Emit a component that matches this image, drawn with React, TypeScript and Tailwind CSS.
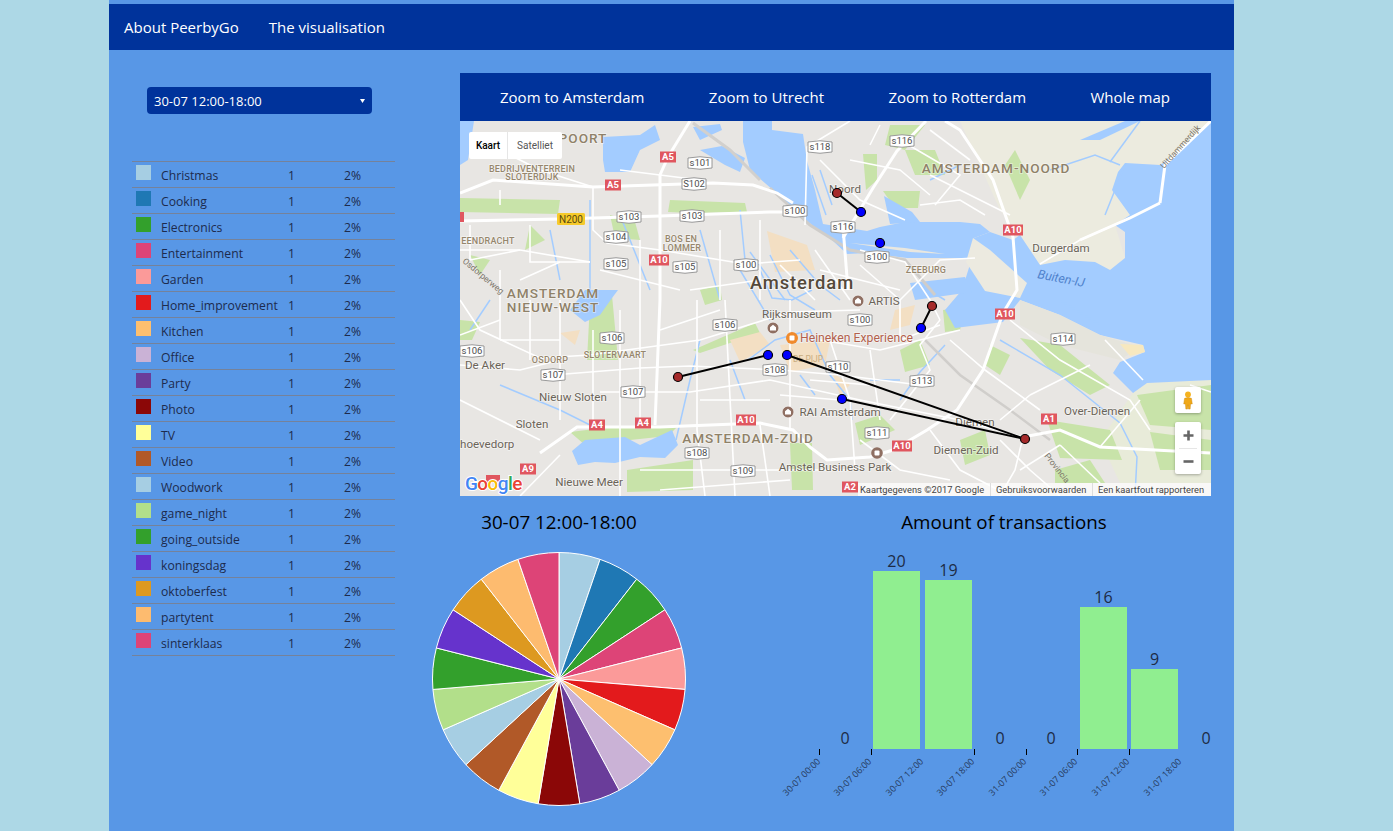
import React from "react";

const rows: [string, string][] = [
  ["Christmas", "#a6cee3"], ["Cooking", "#1f78b4"], ["Electronics", "#33a02c"], ["Entertainment", "#dd4477"],
  ["Garden", "#fb9a99"], ["Home_improvement", "#e31a1c"], ["Kitchen", "#fdbf6f"], ["Office", "#cab2d6"],
  ["Party", "#6a3d9a"], ["Photo", "#8b0707"], ["TV", "#ffff99"], ["Video", "#b15928"], ["Woodwork", "#a6cee3"],
  ["game_night", "#b2df8a"], ["going_outside", "#33a02c"], ["koningsdag", "#6633cc"], ["oktoberfest", "#dd9920"],
  ["partytent", "#fdbb6f"], ["sinterklaas", "#dd4477"],
];

const WATER = [
  "743,121 772,121 772,130 803,134 807,161 815,190 823,224 867,231 880,227 905,222 960,222 980,224 990,232 974,238 972,258 907,258 867,253 847,254 833,241 807,221 773,190 750,170 743,142",
  "1211,121 1175,155 1160,165 1125,163 1118,172 1112,190 1130,215 1115,225 1125,232 1125,258 1110,270 1095,262 1065,260 1040,265 1020,235 1013,240 990,232 974,238 972,258 962,290 945,310 955,328 1003,322 1020,300 1060,315 1100,335 1143,345 1145,352 1120,362 1113,373 1133,393 1147,383 1211,380",
  "572,451 585,440 625,437 640,445 672,430 678,445 665,458 640,457 615,463 595,462 578,465",
  "618,290 585,290 570,310 585,322 600,315 612,298",
  "603,137 640,135 655,125 660,140 640,150 630,172 605,172 603,160",
  "693,127 720,124 722,130 700,140",
  "700,150 725,165 740,172 745,158 722,146",
  "460,121 474,121 468,160 460,165",
  "1125,121 1140,121 1100,140 1080,140",
  "910,283 965,277 972,292 915,300",
  "884,196 912,212 920,222 890,224",
];
const LANDS: [string, string][] = [
  ["960,121 1211,121 1175,155 1160,165 1125,163 1112,190 1130,215 1115,225 1125,258 1110,270 1065,260 1040,265 1020,235 1000,210", "#ecebdf"],
  ["973,238 990,250 1027,283 1020,298 985,291", "#eceae0"],
  ["1133,393 1147,383 1211,380 1211,483 1120,483 1100,440", "#e8ebd9"],
];
const GREENS = [
  "670,200 745,203 747,212 690,213 668,212", "460,198 560,200 558,214 460,212", "863,154 877,154 877,180 866,190",
  "883,191 920,191 918,208 895,208", "905,150 935,150 945,175 915,175", "460,320 480,322 472,340 460,340",
  "590,303 612,295 618,360 587,360", "693,350 755,323 760,333 700,353", "570,432 620,426 678,426 668,436 630,440 585,445",
  "790,443 812,443 813,490 792,490", "627,470 693,460 693,490 627,492", "943,310 966,307 960,330 945,332",
  "1020,338 1060,345 1110,385 1090,395 1050,370", "1047,420 1110,430 1122,460 1060,458", "1137,395 1211,385 1211,430 1150,425",
  "855,423 880,415 895,430 860,445", "900,350 920,340 930,365 905,372", "1150,432 1211,440 1211,470 1160,470",
  "1015,150 1030,180 1020,200 1005,165", "890,125 925,125 905,150 885,145", "610,215 635,222 640,240 615,238", "1055,470 1090,460 1105,483 1055,483",
  "470,255 490,260 480,275", "530,225 545,240 525,250", "700,290 720,285 722,300 705,305", "990,345 1010,355 1000,375 985,365", "960,440 985,430 990,455 965,465",
];
const ORANGE = ["767,231 807,245 815,270 775,272", "780,345 830,340 825,365 790,372", "730,340 760,332 770,345 740,362", "895,310 915,305 910,325 890,330", "560,333 580,330 575,345", "832,372 850,385 840,395"];
const HIGHWAYS = [
  "690,121 668,157 660,175 660,300 655,425", "460,221 560,219 660,216 770,212 795,212", "460,193 493,180 593,187 713,183 753,185 777,193 793,203",
  "540,453 577,427 660,427 760,423 793,430 810,447 827,460 870,457 893,450 927,430 957,410 983,370 1003,313 1017,290 1013,237 993,180 960,130 945,121",
  "843,238 873,188 897,151 926,121", "843,227 848,290", "1023,437 1060,430 1100,447 1210,453", "1160,203 1165,165 1211,121", "1160,203 1130,218 1080,240",
];
const ROADS = [
  "593,187 593,230 607,243 660,250 745,264 800,260", "460,300 480,330 540,358 590,355 700,340 790,312 860,310", "553,375 640,368 690,366 780,370 840,375 920,385",
  "697,300 697,430 705,496", "725,300 735,496", "790,300 790,430", "830,340 850,400 855,470", "620,310 620,496",
  "460,250 520,250 590,262", "530,225 530,262 590,262", "600,392 690,392 770,380 860,400 960,420 1023,437", "593,330 593,425", "640,290 640,425",
  "805,225 807,147 850,121", "820,160 860,200 905,220", "930,175 1010,215", "900,140 960,175 935,205", "1040,264 1080,240 1130,218",
  "940,320 920,345 930,370 890,420", "950,340 985,370 1040,410", "1010,320 1060,360 1130,400 1150,430", "1023,437 1015,470 1000,496",
  "460,400 540,440", "520,496 560,455", "640,470 800,470 850,470", "660,490 790,480", "760,425 770,496",
  "500,190 500,205", "860,440 900,470 950,480", "930,430 960,470 1010,496", "900,300 940,260 975,258", "860,250 905,262 930,300 940,320",
  "1105,340 1143,380", "1140,400 1100,447", "1190,385 1211,392", "1060,445 1100,483",
  "500,270 500,340", "530,300 530,360", "460,335 500,320", "500,340 560,340", "560,300 560,420", "460,365 520,370 560,360", "660,330 720,310", "690,290 760,280",
  "720,230 720,300", "760,220 760,300", "780,265 815,300", "815,250 850,300", "820,270 900,290", "860,265 900,300 900,340", "900,340 940,325", "820,340 880,350 960,330",
  "870,350 880,420", "810,380 870,385", "780,395 840,400", "700,400 770,400", "520,280 560,262", "620,170 700,180", "480,140 540,170 593,187",
  "470,225 470,260", "470,260 520,250", "600,270 680,290", "640,240 640,290", "1000,420 1030,395", "1060,445 1020,470", "1000,440 1030,470 1060,496", "1090,365 1060,380 1030,395",
  "850,160 900,170 930,195", "880,125 870,145", "930,130 970,160", "920,205 960,200 985,215",
];
const CANALS = [
  "676,440 690,380 700,340", "748,360 775,340 810,330 830,375 850,400 852,420", "770,255 790,295 815,310", "790,250 820,285 840,300", "740,270 770,320", "750,252 785,300",
  "1000,340 1060,375 1120,423 1137,457 1135,496", "590,200 590,300", "620,215 650,290", "700,230 720,300", "740,210 745,260", "550,230 560,280", "490,300 470,330",
  "945,345 920,372 900,400", "870,380 900,380", "1060,300 1100,325", "1110,162 1140,121", "1105,215 1125,165", "930,180 960,165", "1050,170 1095,155 1120,165", "500,385 560,410 590,425",
  "812,175 826,215", "820,170 832,205", "760,270 772,298 792,300 812,290", "920,285 945,300", "730,360 745,400", "800,375 815,395",
];
const SHIELDS: [number, number, string][] = [
  [700, 163, "s101"], [694, 184, "S102"], [629, 217, "s103"], [692, 216, "s103"], [795, 211, "s100"], [843, 227, "s116"], [820, 147, "s118"],
  [616, 237, "s104"], [616, 264, "s105"], [685, 267, "s105"], [746, 265, "s100"], [902, 141, "s116"], [877, 257, "s100"], [612, 338, "s106"], [725, 325, "s106"],
  [472, 351, "s106"], [553, 375, "s107"], [633, 392, "s107"], [775, 370, "s108"], [838, 367, "s110"], [697, 453, "s108"], [743, 471, "s109"],
  [860, 320, "s100"], [922, 381, "s113"], [877, 433, "s111"], [1063, 339, "s114"],
];
const REDS: [number, number, string][] = [
  [668, 157, "A5"], [613, 185, "A5"], [659, 260, "A10"], [1013, 230, "A10"], [597, 425, "A4"], [643, 423, "A4"], [746, 420, "A10"], [528, 469, "A9"],
  [902, 446, "A10"], [1005, 314, "A10"], [1049, 419, "A1"], [850, 487, "A2"],
];
const LABELS: [number, number, string, string][] = [
  [583, 143, "POORT", "district"], [532, 172, "BEDRIJVENTERREIN", "small"], [532, 180, "SLOTERDIJK", "small"], [488, 244, "EENDRACHT", "small"], [681, 242, "BOS EN", "small"], [682, 251, "LOMMER", "small"],
  [996, 173, "AMSTERDAM-NOORD", "district"], [926, 273, "ZEEBURG", "small"], [553, 298, "AMSTERDAM", "district"], [553, 312, "NIEUW-WEST", "district"], [550, 363, "OSDORP", "small"], [615, 358, "SLOTERVAART", "small"],
  [748, 443, "AMSTERDAM-ZUID", "district"], [1061, 252, "Durgerdam", "place"], [485, 369, "De Aker", "place"], [573, 401, "Nieuw Sloten", "place"], [532, 428, "Sloten", "place"], [589, 486, "Nieuwe Meer", "place"],
  [835, 471, "Amstel Business Park", "place"], [797, 318, "Rijksmuseum", "place"], [884, 305, "ARTIS", "place"], [845, 193, "Noord", "place"], [975, 426, "Diemen", "place"], [966, 454, "Diemen-Zuid", "place"], [1097, 415, "Over-Diemen", "place"], [840, 416, "RAI Amsterdam", "place"],
];
const labelClass: Record<string, string> = {
  district: "fill-[#8f8168] text-[13.6px] font-medium tracking-[1px]",
  small: "fill-[#96866c] text-[9px] font-medium tracking-[0.2px]",
  place: "fill-[#6b6458] text-[11.6px]",
};

function Poi({ x, y, c = "#8f6f62" }: { x: number; y: number; c?: string }) {
  return (
    <g>
      <circle cx={x} cy={y} r={5.8} fill={c} stroke="#ffffff99" strokeWidth={0.8} />
      <path d={`M${x - 3} ${y + 2.6}V${y - 0.8}L${x} ${y - 3.2}L${x + 3} ${y - 0.8}V${y + 2.6}Z`} fill="#fff" />
    </g>
  );
}

function MapArt() {
  return (
    <svg viewBox="460 121 751 375" width={751} height={375} className="block font-['Roboto',sans-serif]">
      <rect x={460} y={121} width={751} height={375} fill="#e8e6e3" />
      {LANDS.map(([p, c], i) => <polygon key={i} points={p} fill={c} />)}
      {GREENS.map((p, i) => <polygon key={i} points={p} fill="#c8e3a9" />)}
      {ORANGE.map((p, i) => <polygon key={i} points={p} fill="#f3dfc3" />)}
      {WATER.map((p, i) => <polygon key={i} points={p} fill="#a3ccff" />)}
      <polygon points="973,238 990,250 1027,283 1020,298 985,291 966,262" fill="#eceae0" />
      <polygon points="850,243 905,248 945,254 910,252" fill="#e9e7df" />
      <polygon points="1020,300 1060,315 1100,335 1140,347 1120,360 1060,345 1020,325" fill="#e5e4dc" />
      <polygon points="1120,344 1143,345 1145,352 1130,356" fill="#f7e8bf" />
      {CANALS.map((p, i) => <polyline key={i} points={p} fill="none" stroke="#a3ccff" strokeWidth={1.5} />)}
      <polyline points="693,123 730,150 760,180" fill="none" stroke="#d2d0cd" strokeWidth={3} />
      <polyline points="770,188 810,225 850,250 905,260 935,295" fill="none" stroke="#cfcdca" strokeWidth={3} />
      <polyline points="925,340 960,375 1010,410 1050,440" fill="none" stroke="#d0cecb" strokeWidth={2.5} />
      {ROADS.map((p, i) => <polyline key={i} points={p} fill="none" stroke="#fff" strokeWidth={1.6} />)}
      {HIGHWAYS.map((p, i) => <polyline key={i} points={p} fill="none" stroke="#fff" strokeWidth={3} />)}
      {SHIELDS.map(([x, y, t], i) => (
        <g key={i}>
          <path d={`M${x - 12} ${y - 5}Q${x} ${y - 7.5} ${x + 12} ${y - 5}V${y + 5}Q${x} ${y + 7.5} ${x - 12} ${y + 5}Z`} fill="#fff" stroke="#8d8d8d" strokeWidth={0.9} />
          <text x={x} y={y + 3.3} textAnchor="middle" className="fill-[#4d4d4d] text-[9.5px]">{t}</text>
        </g>
      ))}
      <rect x={486} y={475} width={14} height={8} fill="#e0565f" />
      <rect x={460} y={212} width={4} height={10} fill="#e0565f" />
      {REDS.map(([x, y, t], i) => {
        const w = t.length > 2 ? 20 : 16;
        return (
          <g key={i}>
            <rect x={x - w / 2} y={y - 5.5} width={w} height={11} fill="#e0565f" />
            <text x={x} y={y + 3.4} textAnchor="middle" className="fill-white text-[9.5px] font-bold">{t}</text>
          </g>
        );
      })}
      <rect x={557} y={213} width={28} height={12} rx={1.5} fill="#f6ca2a" />
      <text x={571} y={223} textAnchor="middle" className="fill-[#5a4a10] text-[10px]">N200</text>
      {LABELS.map(([x, y, t, k], i) => (
        <text key={i} x={x} y={y} textAnchor="middle" stroke="#ffffff80" strokeWidth={1.5} paintOrder="stroke" className={labelClass[k]}>{t}</text>
      ))}
      <text x={460} y={448} stroke="#ffffff80" strokeWidth={1.5} paintOrder="stroke" className="fill-[#6b6458] text-[11.6px]">hoevedorp</text>
      <text x={802} y={289} textAnchor="middle" stroke="#ffffffa0" strokeWidth={2} paintOrder="stroke" className="fill-[#55493a] text-[18.4px] font-medium tracking-[0.9px]">Amsterdam</text>
      <text x={800} y={342} stroke="#ffffff80" strokeWidth={1.5} paintOrder="stroke" className="fill-[#b2614d] text-[12.2px]">Heineken Experience</text>
      <text x={808} y={362} textAnchor="middle" className="fill-[#c9ad80] text-[8.5px]">DE PIJP</text>
      <text x={1037} y={278} transform="rotate(11 1037 278)" className="fill-[#4f82cc] text-[12.5px] italic">Buiten-IJ</text>
      <text x={1164} y={169} transform="rotate(-48 1164 169)" className="fill-[#7a7468] text-[8.5px]">Uitdammerdijk</text>
      <text x={1044} y={456} transform="rotate(52 1044 456)" className="fill-[#7a7468] text-[8.5px]">Provincia</text>
      <text x={462} y={262} transform="rotate(40 462 262)" className="fill-[#7a7468] text-[8.5px]">Osdorperweg</text>
      <Poi x={773} y={328} />
      <Poi x={788} y={412} />
      <Poi x={858} y={301} />
      <circle cx={877} cy={453} r={5.8} fill="#8f6f62" />
      <rect x={874.5} y={450.5} width={5} height={5} rx={1} fill="#fff" />
      <circle cx={792} cy={338} r={6} fill="#f08a2c" />
      <rect x={789.5} y={335.5} width={5} height={5} rx={1} fill="#fff" />
      <g stroke="#000" strokeWidth={2} fill="none">
        <line x1={837} y1={193} x2={861} y2={212} />
        <line x1={932} y1={306} x2={921} y2={328} />
        <line x1={678} y1={377} x2={768} y2={355} />
        <line x1={787} y1={355} x2={1025} y2={439} />
        <line x1={842} y1={399} x2={1025} y2={439} />
      </g>
      {[[837, 193], [932, 306], [678, 377], [1025, 439]].map(([x, y], i) => (
        <circle key={i} cx={x} cy={y} r={4.5} fill="#a52a2a" stroke="#000" strokeWidth={1.2} />
      ))}
      {[[861, 212], [880, 243], [921, 328], [768, 355], [787, 355], [842, 399]].map(([x, y], i) => (
        <circle key={i} cx={x} cy={y} r={4.5} fill="#0000ff" stroke="#000" strokeWidth={1.2} />
      ))}
      <text x={465} y={490} stroke="#fff" strokeWidth={2} paintOrder="stroke" className="text-[19px] font-medium tracking-[-0.6px]">
        <tspan fill="#4285f4">G</tspan><tspan fill="#ea4335">o</tspan><tspan fill="#fbbc05">o</tspan><tspan fill="#4285f4">g</tspan><tspan fill="#34a853">l</tspan><tspan fill="#ea4335">e</tspan>
      </text>
    </svg>
  );
}

function MapPanel() {
  return (
    <div className="relative h-[375px] w-[751px] overflow-hidden">
      <MapArt />
      <div className="absolute left-[9px] top-[11px] flex h-[27px] w-[93px] items-center rounded-[2px] bg-white font-['Roboto',sans-serif] text-[10px]">
        <span className="flex h-full w-[39px] items-center justify-center border-r border-[#e6e6e6] font-medium text-black">Kaart</span>
        <span className="flex h-full flex-1 items-center justify-center text-[#565656]">Satelliet</span>
      </div>
      <div className="absolute left-[715px] top-[266px] flex h-[26px] w-[26px] items-center justify-center rounded-[2px] bg-white shadow-[0_1px_3px_rgba(0,0,0,0.3)]">
        <svg width="12" height="21" viewBox="0 0 14 22">
          <circle cx="7" cy="4" r="3.4" fill="#f5b21f" />
          <path d="M3 8.5 Q7 6.5 11 8.5 L12 15 L10 15 L9.5 21 L7.5 21 L7 16 L6.5 21 L4.5 21 L4 15 L2 15 Z" fill="#f0a818" stroke="#c9860f" strokeWidth="0.5" />
        </svg>
      </div>
      <div className="absolute left-[715px] top-[301px] flex h-[52px] w-[26px] flex-col items-center rounded-[2px] bg-white shadow-[0_1px_3px_rgba(0,0,0,0.3)]">
        <div className="flex h-[26px] w-full items-center justify-center">
          <svg width="11" height="11" viewBox="0 0 11 11"><path d="M4.2 0.5h2.6v3.7h3.7v2.6H6.8v3.7H4.2V6.8H0.5V4.2h3.7z" fill="#666" /></svg>
        </div>
        <div className="h-px w-[18px] bg-[#e6e6e6]" />
        <div className="flex h-[25px] w-full items-center justify-center">
          <svg width="11" height="11" viewBox="0 0 11 11"><rect x="0.5" y="4.2" width="10" height="2.6" fill="#666" /></svg>
        </div>
      </div>
      <div className="absolute bottom-0 right-0 flex h-[13px] w-[353px] items-center bg-[#ffffffb8] pl-[2px] font-['Roboto',sans-serif] text-[9.3px] text-[#444]">
        <span className="w-[131px] whitespace-nowrap border-r border-[#ddd]">Kaartgegevens ©2017 Google</span>
        <span className="w-[102px] whitespace-nowrap border-r border-[#ddd] pl-[5px]">Gebruiksvoorwaarden</span>
        <span className="whitespace-nowrap pl-[5px]">Een kaartfout rapporteren</span>
      </div>
    </div>
  );
}

function Pie() {
  const cx = 127, cy = 127, r = 126.5;
  const n = rows.length;
  return (
    <svg width={254} height={254} viewBox="0 0 254 254" className="block">
      {rows.map(([name, color], i) => {
        const a0 = (i / n) * 2 * Math.PI, a1 = ((i + 1) / n) * 2 * Math.PI;
        const d = `M${cx} ${cy}L${cx + r * Math.sin(a0)} ${cy - r * Math.cos(a0)}A${r} ${r} 0 0 1 ${cx + r * Math.sin(a1)} ${cy - r * Math.cos(a1)}Z`;
        return <path key={name} d={d} fill={color} stroke="#fff" strokeWidth={1} />;
      })}
    </svg>
  );
}

function Bars() {
  const bars = [[873, 571, 47, "20"], [925, 580, 47, "19"], [1080, 607, 47, "16"], [1131, 669, 47, "9"]] as [number, number, number, string][];
  const zeros = [845, 1000, 1051, 1206];
  const ticks = [819.5, 871.5, 974.5, 1026.5, 1077.5, 1129.5];
  const tl: [number, string][] = [[821, "30-07 00:00"], [872, "30-07 06:00"], [924, "30-07 12:00"], [975, "30-07 18:00"], [1027, "31-07 00:00"], [1078, "31-07 06:00"], [1130, "31-07 12:00"], [1182, "31-07 18:00"]];
  return (
    <svg viewBox="770 552 464 279" width={464} height={279} className="block">
      {bars.map(([x, y, w, t]) => (
        <g key={x}>
          <rect x={x} y={y} width={w} height={749 - y} fill="#90ee90" />
          <text x={x + w / 2} y={y - 4} textAnchor="middle" className="fill-[#1d2b45] text-[16px]">{t}</text>
        </g>
      ))}
      {zeros.map((x) => <text key={x} x={x} y={744} textAnchor="middle" className="fill-[#1d2b45] text-[16px]">0</text>)}
      {ticks.map((x) => <line key={x} x1={x} x2={x} y1={749} y2={755} stroke="#000" strokeWidth={1} />)}
      {tl.map(([x, t]) => (
        <text key={t} x={x} y={762} textAnchor="end" transform={`rotate(-45 ${x} 762)`} className="fill-[#263a5c] text-[9px]">{t}</text>
      ))}
    </svg>
  );
}

export default function App() {
  return (
    <div className="min-h-screen bg-[#add8e6] font-['Open_Sans',sans-serif]">
      <div className="ml-[109px] h-[831px] w-[1125px] overflow-hidden bg-[#5897e6] pt-[4px]">
        <nav className="flex h-[46px] items-center gap-[30px] bg-[#00339b] pl-[15px] text-[15px] text-white">
          <span>About PeerbyGo</span>
          <span>The visualisation</span>
        </nav>
        <div className="flex">
          <aside className="w-[323px] shrink-0">
            <div className="ml-[38px] mt-[37px] flex h-[27px] w-[225px] items-center justify-between rounded-[4px] bg-[#00339b] pl-[7px] pr-[7px] text-[13px] text-white">
              <span className="pt-[2px]">30-07 12:00-18:00</span>
              <svg width="5" height="4" viewBox="0 0 5 4"><path d="M0 0h5L2.5 4z" fill="#fff" /></svg>
            </div>
            <div className="ml-[23px] mt-[47px] w-[263px] border-b border-[#75829a] text-[12.2px] text-[#1d2b4d]">
              {rows.map(([name, color]) => (
                <div key={name} className="flex h-[26px] border-t border-[#75829a]">
                  <span className="ml-[4px] mt-[3px] h-[15px] w-[15px] shrink-0" style={{ backgroundColor: color }} />
                  <span className="ml-[10px] mt-[5px] w-[127px] whitespace-nowrap">{name}</span>
                  <span className="mt-[5px] w-[56px]">1</span>
                  <span className="mt-[5px]">2%</span>
                </div>
              ))}
            </div>
          </aside>
          <main className="flex-1">
            <div className="ml-[28px] mt-[23px] w-[751px]">
              <div className="flex h-[48px] items-center justify-between bg-[#00339b] pl-[40px] pr-[41px] text-[15px] text-white">
                <span>Zoom to Amsterdam</span>
                <span>Zoom to Utrecht</span>
                <span>Zoom to Rotterdam</span>
                <span>Whole map</span>
              </div>
              <MapPanel />
            </div>
            <div className="flex">
              <div className="w-[254px] shrink-0">
                <h2 className="flex h-[56px] items-start justify-center whitespace-nowrap pt-[14px] text-[18.8px] leading-[24px] text-black">30-07 12:00-18:00</h2>
                <Pie />
              </div>
              <div className="ml-[84px] w-[464px]">
                <h2 className="flex h-[56px] items-start justify-center whitespace-nowrap pl-[4px] pt-[14px] text-[18.8px] leading-[24px] text-black">Amount of transactions</h2>
                <Bars />
              </div>
            </div>
          </main>
        </div>
      </div>
    </div>
  );
}
